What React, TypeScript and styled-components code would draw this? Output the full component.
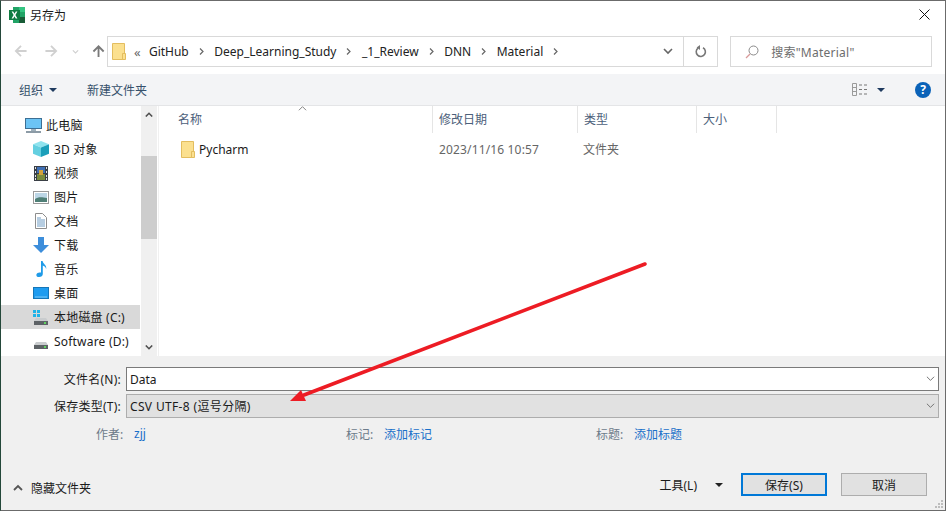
import { ReactNode } from "react";
import styled, { createGlobalStyle } from "styled-components";

const GlobalStyle = createGlobalStyle`
  html, body { margin: 0; padding: 0; background: #fff; }
  body {
    font-family: "Noto Sans", "Noto Sans CJK SC", sans-serif;
    font-size: 12px;
    color: #1a1a1a;
  }
  * { box-sizing: border-box; }
`;

function FolderIcon() {
  return (
    <svg width="14" height="17" viewBox="0 0 14 17">
      <path d="M.5 .5h12v16H.5z" fill="#fbe08f" stroke="#e3bd5f" />
      <path d="M10.5 10.5h3v6h-3z" fill="#fbe08f" stroke="#e3bd5f" />
    </svg>
  );
}

function ExcelIcon() {
  return (
    <svg width="16" height="16" viewBox="0 0 16 16">
      <rect x="4" y="0" width="12" height="16" fill="#21a366" />
      <rect x="10" y="0" width="6" height="5" fill="#33c481" />
      <rect x="10" y="10" width="6" height="6" fill="#185c37" />
      <rect x="0" y="3" width="11" height="10" fill="#107c41" />
      <path d="M2.6 4.5h1.6l1.3 2.2 1.3-2.2h1.6L6.4 8l2 3.5H6.7L5.5 9.3 4.2 11.5H2.6l2-3.5z" fill="#fff" />
    </svg>
  );
}

function PcIcon() {
  return (
    <svg width="17" height="15" viewBox="0 0 17 15">
      <rect x=".5" y=".5" width="16" height="10" fill="#6cc4f5" stroke="#3d6f94" />
      <rect x="6" y="11" width="5" height="2" fill="#9fb0bc" />
      <rect x="1" y="13" width="15" height="2" fill="#8c9ba6" />
    </svg>
  );
}

function CubeIcon() {
  return (
    <svg width="16" height="16" viewBox="0 0 17 17">
      <path d="M8.5 0 17 3.5 8.5 7 0 3.5z" fill="#8fe3ee" />
      <path d="M0 3.5 8.5 7v10L0 13.5z" fill="#64cfe0" />
      <path d="M17 3.5 8.5 7v10l8.5-3.5z" fill="#1b9fba" />
    </svg>
  );
}

function VideoIcon() {
  return (
    <svg width="14" height="15" viewBox="0 0 14 15">
      <rect width="14" height="15" fill="#3a3f46" />
      <rect x="3" y="1" width="8" height="6" fill="#3f6fb5" />
      <rect x="3" y="8" width="8" height="6" fill="#7a8a3c" />
      <rect x="5" y="4" width="4" height="5" fill="#d4a23a" />
      <path d="M1 1h1v2H1zM1 5h1v2H1zM1 9h1v2H1zM1 12h1v2H1zM12 1h1v2h-1zM12 5h1v2h-1zM12 9h1v2h-1zM12 12h1v2h-1z" fill="#dfe3e6" />
    </svg>
  );
}

function PictureIcon() {
  return (
    <svg width="16" height="13" viewBox="0 0 16 13">
      <rect x=".5" y=".5" width="15" height="12" fill="#fff" stroke="#9a9a9a" />
      <rect x="2" y="2" width="12" height="9" fill="#bcd6e6" />
      <path d="M2 8c3-2 6-2 12-1v4H2z" fill="#4f7f76" />
    </svg>
  );
}

function DocIcon() {
  return (
    <svg width="12" height="16" viewBox="0 0 12 16">
      <path d="M.5 .5h7l4 4v11H.5z" fill="#fff" stroke="#8d8d8d" />
      <path d="M2 5h4M2 7h8M2 9h8M2 11h8M2 13h8" stroke="#6f9cc4" />
    </svg>
  );
}

function DownloadIcon() {
  return (
    <svg width="16" height="16" viewBox="0 0 16 16">
      <path d="M5 0h6v8h5l-8 8-8-8h5z" fill="#3d8edb" />
    </svg>
  );
}

function MusicIcon() {
  return (
    <svg width="11" height="16" viewBox="0 0 11 16">
      <path d="M5 0h1.6c.4 3 4.4 4 3.6 8-.6-2-2.4-3-3.4-3.4V13c0 1.8-1.6 3-3.6 3S0 15 .4 13.4C.8 11.6 3.2 11 5 11.6z" fill="#1f9be8" />
    </svg>
  );
}

function DesktopIcon() {
  return (
    <svg width="16" height="12" viewBox="0 0 16 12">
      <rect x=".5" y=".5" width="15" height="11" fill="#1e9cf0" stroke="#1576b8" />
      <path d="M2 10h12" stroke="#7cc8f5" />
    </svg>
  );
}

function DriveIcon({ windows }: { windows?: boolean }) {
  return (
    <svg width="16" height="15" viewBox="0 0 16 15">
      {windows && <path d="M0 0h3v3H0zM4 0h3v3H4zM0 4h3v3H0zM4 4h3v3H4z" fill="#1fb3e8" />}
      <path d="M3 8h10l2 3H1z" fill="#c9ccce" />
      <rect x="1" y="11" width="14" height="4" fill="#5d6266" />
      <rect x="11" y="12" width="2" height="2" fill="#5fd35f" />
    </svg>
  );
}

function Chevron({ up, size = 9, color = "#555", width = 1.6 }: { up?: boolean; size?: number; color?: string; width?: number }) {
  return (
    <svg width={size} height={size - 3} viewBox="0 0 10 6">
      <path d={up ? "M1 5.5 5 1.5l4 4" : "M1 .5l4 4 4-4"} fill="none" stroke={color} strokeWidth={width} />
    </svg>
  );
}

function Caret({ color = "#1f3a5f" }: { color?: string }) {
  return (
    <svg width="8" height="4" viewBox="0 0 8 4">
      <path d="M0 0h8L4 4z" fill={color} />
    </svg>
  );
}

function NavArrow({ direction, color }: { direction: "left" | "right" | "up"; color: string }) {
  const paths = {
    left: "M7 1 1.5 6.5 7 12M2 6.5h11",
    right: "M7 1l5.5 5.5L7 12M12 6.5H1",
    up: "M1 7l5.5-5.5L12 7M6.5 2v11",
  };
  return (
    <svg width="14" height="13" viewBox="0 0 14 14">
      <path d={paths[direction]} fill="none" stroke={color} strokeWidth="2" />
    </svg>
  );
}

function Sep() {
  return (
    <svg width="5" height="7" viewBox="0 0 5 7">
      <path d="M1 .5l3 3-3 3" fill="none" stroke="#666" strokeWidth="1.2" />
    </svg>
  );
}

const crumbs = ["GitHub", "Deep_Learning_Study", "_1_Review", "DNN", "Material"];

const tree: { icon: ReactNode; label: string; selected?: boolean }[] = [
  { icon: <CubeIcon />, label: "3D 对象" },
  { icon: <VideoIcon />, label: "视频" },
  { icon: <PictureIcon />, label: "图片" },
  { icon: <DocIcon />, label: "文档" },
  { icon: <DownloadIcon />, label: "下载" },
  { icon: <MusicIcon />, label: "音乐" },
  { icon: <DesktopIcon />, label: "桌面" },
  { icon: <DriveIcon windows />, label: "本地磁盘 (C:)", selected: true },
  { icon: <DriveIcon />, label: "Software (D:)" },
];

const columns = [
  { label: "名称", width: 274 },
  { label: "修改日期", width: 145 },
  { label: "类型", width: 119 },
  { label: "大小", width: 80 },
];

export default function App() {
  return (
    <>
      <GlobalStyle />
      <Window>
        <TitleBar>
          <ExcelIcon />
          <Title>另存为</Title>
          <CloseIcon viewBox="0 0 11 11">
            <path d="M.5 .5l10 10M10.5 .5l-10 10" stroke="#111" strokeWidth="1" />
          </CloseIcon>
        </TitleBar>

        <NavBar>
          <NavButtons>
            <NavArrow direction="left" color="#d0d0d0" />
            <NavArrow direction="right" color="#d0d0d0" />
            <Chevron size={7} color="#d0d0d0" />
            <NavArrow direction="up" color="#7a7a7a" />
          </NavButtons>
          <AddressBox>
            <AddressFolder>
              <FolderIcon />
            </AddressFolder>
            <Overflow>«</Overflow>
            {crumbs.map((crumb) => (
              <Crumb key={crumb}>
                {crumb}
                <Sep />
              </Crumb>
            ))}
            <AddressEnd>
              <Chevron size={10} color="#666" />
            </AddressEnd>
            <RefreshBox>
              <svg width="12" height="13" viewBox="0 0 12 13">
                <path d="M3 3.2A4.6 4.6 0 1 0 8 2.8" fill="none" stroke="#777" strokeWidth="1.6" />
                <path d="M5 0v5L1.6 2.6z" fill="#777" />
              </svg>
            </RefreshBox>
          </AddressBox>
          <SearchBox>
            <svg width="14" height="14" viewBox="0 0 14 14">
              <circle cx="8.5" cy="5.5" r="4.5" fill="none" stroke="#8a8a8a" />
              <path d="M5 9l-4 4" stroke="#d89a9a" strokeWidth="1.2" />
            </svg>
            <SearchText>搜索"Material"</SearchText>
          </SearchBox>
        </NavBar>

        <Toolbar>
          <ToolLabel>
            组织
            <Caret />
          </ToolLabel>
          <NewFolder>新建文件夹</NewFolder>
          <ToolbarRight>
            <svg width="16" height="13" viewBox="0 0 16 13">
              <path d="M.5 .5h4v12h-4zM.5 4.5h4M.5 8.5h4" fill="none" stroke="#9a9a9a" />
              <path d="M7 2h3M12 2h3M7 6.5h3M12 6.5h3M7 11h3M12 11h3" stroke="#777" />
            </svg>
            <Caret />
            <HelpBadge>?</HelpBadge>
          </ToolbarRight>
        </Toolbar>

        <Main>
          <Sidebar>
            <TreeRow $root>
              <PcIcon />
              <span>此电脑</span>
            </TreeRow>
            {tree.map((item) => (
              <TreeRow key={item.label} $selected={item.selected}>
                <TreeIcon>{item.icon}</TreeIcon>
                <span>{item.label}</span>
              </TreeRow>
            ))}
          </Sidebar>
          <Scrollbar>
            <ScrollEnd>
              <Chevron up size={8} color="#505050" width={2} />
            </ScrollEnd>
            <Thumb />
            <ScrollEnd>
              <Chevron size={8} color="#505050" width={2} />
            </ScrollEnd>
          </Scrollbar>
          <Content>
            <HeaderRow>
              {columns.map((column, i) => (
                <HeaderCell key={column.label} style={{ width: column.width }}>
                  {i === 0 && (
                    <SortMark>
                      <Chevron up size={9} color="#777" width={1} />
                    </SortMark>
                  )}
                  {column.label}
                </HeaderCell>
              ))}
            </HeaderRow>
            <FileRow>
              <FileName>
                <FolderIcon />
                Pycharm
              </FileName>
              <FileDate>2023/11/16 10:57</FileDate>
              <FileType>文件夹</FileType>
            </FileRow>
          </Content>
        </Main>

        <Bottom>
          <FieldRow>
            <FieldLabel>文件名(N):</FieldLabel>
            <Field>
              Data
              <Chevron size={9} color="#666" width={1} />
            </Field>
          </FieldRow>
          <FieldRow>
            <FieldLabel>保存类型(T):</FieldLabel>
            <Field $select>
              CSV UTF-8 (逗号分隔)
              <Chevron size={9} color="#666" width={1} />
            </Field>
          </FieldRow>
          <MetaRow>
            <Meta $width={250}>
              <MetaKey $width={38}>作者:</MetaKey>
              <MetaLink>zjj</MetaLink>
            </Meta>
            <Meta $width={250}>
              <MetaKey $width={38}>标记:</MetaKey>
              <MetaLink>添加标记</MetaLink>
            </Meta>
            <Meta>
              <MetaKey $width={38}>标题:</MetaKey>
              <MetaLink>添加标题</MetaLink>
            </Meta>
          </MetaRow>
          <Footer>
            <HideFolders>
              <Chevron up size={10} color="#555" width={1.8} />
              隐藏文件夹
            </HideFolders>
            <Tools>
              工具(L)
              <Caret color="#222" />
            </Tools>
            <Button $primary>保存(S)</Button>
            <Button>取消</Button>
          </Footer>
          <Grip viewBox="0 0 10 10">
            <path d="M7 1h2v2H7zM4 4h2v2H4zM7 4h2v2H7zM1 7h2v2H1zM4 7h2v2H4zM7 7h2v2H7z" fill="#bdbdbd" />
          </Grip>
        </Bottom>

        <Annotation viewBox="0 0 946 511">
          <path d="M645 264 304 395" stroke="#ed1c24" strokeWidth="3.5" strokeLinecap="round" />
          <path d="M290 401 301 390 306 401z" fill="#ed1c24" />
        </Annotation>
      </Window>
    </>
  );
}

const Window = styled.div`
  position: relative;
  width: 946px;
  height: 511px;
  display: flex;
  flex-direction: column;
  background: #fff;
  border-top: 1px solid #6b6b6b;
  border-left: 1px solid #24483a;
  border-right: 1px solid #6b6b6b;
  border-bottom: 1px solid #6b6b6b;
  overflow: hidden;
  &::before {
    content: "";
    position: absolute;
    left: 0;
    top: -1px;
    width: 132px;
    height: 1px;
    background: #24483a;
  }
  &::after {
    content: "";
    position: absolute;
    left: 0;
    bottom: -1px;
    width: 132px;
    height: 1px;
    background: #24483a;
  }
`;

const TitleBar = styled.div`
  height: 30px;
  display: flex;
  align-items: center;
  padding: 0 16px 3px 8px;
  flex: none;
`;

const Title = styled.span`
  margin-left: 5px;
  font-size: 12px;
`;

const CloseIcon = styled.svg`
  width: 11px;
  height: 11px;
  margin-left: auto;
  margin-right: -1px;
`;

const NavBar = styled.div`
  height: 43px;
  flex: none;
  display: flex;
  padding: 5px 13px 7px 0;
`;

const NavButtons = styled.div`
  width: 106px;
  display: flex;
  align-items: center;
  padding-left: 13px;
  gap: 16px;
  & > svg:nth-child(3) {
    margin: 0 -3px 0 -2px;
  }
`;

const AddressBox = styled.div`
  width: 612px;
  border: 1px solid #d9d9d9;
  display: flex;
  align-items: center;
  padding-left: 4px;
`;

const AddressFolder = styled.span`
  display: flex;
  margin-right: 8px;
`;

const Overflow = styled.span`
  width: 15px;
  color: #666;
  font-size: 13px;
`;

const Crumb = styled.span`
  display: inline-flex;
  align-items: center;
  gap: 10px;
  margin-right: 10.5px;
  color: #222;
  white-space: nowrap;
`;

const AddressEnd = styled.span`
  margin-left: auto;
  width: 30px;
  display: flex;
  justify-content: center;
`;

const RefreshBox = styled.span`
  width: 34px;
  align-self: stretch;
  border-left: 1px solid #d9d9d9;
  display: flex;
  align-items: center;
  justify-content: center;
`;

const SearchBox = styled.div`
  width: 202px;
  margin-left: 12px;
  border: 1px solid #d9d9d9;
  display: flex;
  align-items: center;
  padding-left: 14px;
`;

const SearchText = styled.span`
  margin-left: 12px;
  color: #6d6d6d;
  letter-spacing: 0.25px;
`;

const Toolbar = styled.div`
  height: 32px;
  flex: none;
  display: flex;
  align-items: center;
  background: #f3f4f6;
  border-bottom: 1px solid #e4e5e7;
  padding: 0 14px 0 18px;
  color: #35506b;
`;

const ToolLabel = styled.span`
  display: inline-flex;
  align-items: center;
  gap: 6px;
`;

const NewFolder = styled.span`
  margin-left: 30px;
`;

const ToolbarRight = styled.div`
  margin-left: auto;
  display: flex;
  align-items: center;
  gap: 9px;
`;

const HelpBadge = styled.span`
  width: 16px;
  height: 16px;
  margin-left: 21px;
  border-radius: 50%;
  background: #0a62b8;
  color: #fff;
  font-weight: 700;
  font-size: 12px;
  line-height: 16px;
  text-align: center;
`;

const Main = styled.div`
  height: 250px;
  flex: none;
  display: flex;
`;

const Sidebar = styled.div`
  width: 139px;
  padding-top: 7px;
  flex: none;
  overflow: hidden;
`;

const TreeRow = styled.div<{ $root?: boolean; $selected?: boolean }>`
  height: 24px;
  display: flex;
  align-items: center;
  gap: ${(p) => (p.$root ? "4px" : "0")};
  padding-left: ${(p) => (p.$root ? "24px" : "30px")};
  background: ${(p) => (p.$selected ? "#d9d9d9" : "transparent")};
  color: #1a1a1a;
  letter-spacing: 0.2px;
  white-space: nowrap;
`;

const TreeIcon = styled.span`
  width: 20px;
  display: flex;
  justify-content: center;
  margin-right: 3px;
`;

const Scrollbar = styled.div`
  width: 16px;
  margin-left: 1px;
  flex: none;
  display: flex;
  flex-direction: column;
  background: #f0f0f0;
`;

const ScrollEnd = styled.span`
  height: 17px;
  flex: none;
  display: flex;
  align-items: center;
  justify-content: center;
  &:last-child {
    margin-top: auto;
  }
`;

const Thumb = styled.div`
  height: 83px;
  margin-top: 33px;
  background: #cdcdcd;
`;

const Content = styled.div`
  flex: 1;
  margin-left: 1px;
  border-left: 1px solid #f0f0f0;
`;

const HeaderRow = styled.div`
  height: 27px;
  display: flex;
  color: #4c607a;
`;

const HeaderCell = styled.div`
  position: relative;
  display: flex;
  align-items: center;
  padding: 0 0 2px 6px;
  border-right: 1px solid #e5e5e5;
  &:first-child {
    padding-left: 19px;
  }
`;

const SortMark = styled.span`
  position: absolute;
  top: -1px;
  left: 139px;
  display: flex;
`;

const FileRow = styled.div`
  height: 24px;
  margin-top: 4px;
  display: flex;
  align-items: center;
`;

const FileName = styled.span`
  width: 280px;
  padding-left: 22px;
  display: flex;
  align-items: center;
  gap: 4px;
  color: #1a1a1a;
`;

const FileDate = styled.span`
  width: 144px;
  color: #666;
  letter-spacing: 0.15px;
`;

const FileType = styled.span`
  color: #666;
`;

const Bottom = styled.div`
  position: relative;
  flex: 1;
  background: #f0f0f0;
  padding-top: 11px;
`;

const FieldRow = styled.div`
  display: flex;
  align-items: center;
  height: 24px;
  margin-bottom: 3px;
`;

const FieldLabel = styled.span`
  width: 120px;
  text-align: right;
  color: #1a1a1a;
  letter-spacing: 0.25px;
`;

const Field = styled.div<{ $select?: boolean }>`
  margin-left: 5px;
  width: 813px;
  height: 24px;
  display: flex;
  align-items: center;
  justify-content: space-between;
  padding: 0 3px 0 3px;
  background: ${(p) => (p.$select ? "#e1e1e1" : "#fff")};
  border: 1px solid ${(p) => (p.$select ? "#adadad" : "#7a7a7a")};
  letter-spacing: ${(p) => (p.$select ? "0.35px" : "0")};
`;

const MetaRow = styled.div`
  display: flex;
  margin-top: 6px;
  padding-left: 95px;
  height: 20px;
  align-items: center;
`;

const Meta = styled.div<{ $width?: number }>`
  display: flex;
  width: ${(p) => (p.$width ? `${p.$width}px` : "auto")};
`;

const MetaKey = styled.span<{ $width: number }>`
  width: ${(p) => p.$width}px;
  color: #6d7b8a;
`;

const MetaLink = styled.span`
  color: #1a6fc9;
`;

const Footer = styled.div`
  display: flex;
  align-items: center;
  height: 23px;
  margin-top: 29px;
  padding: 0 18px 0 12px;
`;

const HideFolders = styled.span`
  display: inline-flex;
  align-items: center;
  gap: 8px;
  margin-top: 6px;
`;

const Tools = styled.span`
  margin-left: auto;
  display: inline-flex;
  align-items: center;
  gap: 18px;
  margin-right: 18px;
`;

const Button = styled.div<{ $primary?: boolean }>`
  width: 86px;
  height: 23px;
  display: flex;
  align-items: center;
  justify-content: center;
  background: #e1e1e1;
  border: ${(p) => (p.$primary ? "2px solid #0078d7" : "1px solid #adadad")};
  & + & {
    margin-left: 14px;
  }
`;

const Grip = styled.svg`
  position: absolute;
  right: 1px;
  bottom: 1px;
  width: 10px;
  height: 10px;
`;

const Annotation = styled.svg`
  position: absolute;
  left: -1px;
  top: -1px;
  width: 946px;
  height: 511px;
  pointer-events: none;
`;
